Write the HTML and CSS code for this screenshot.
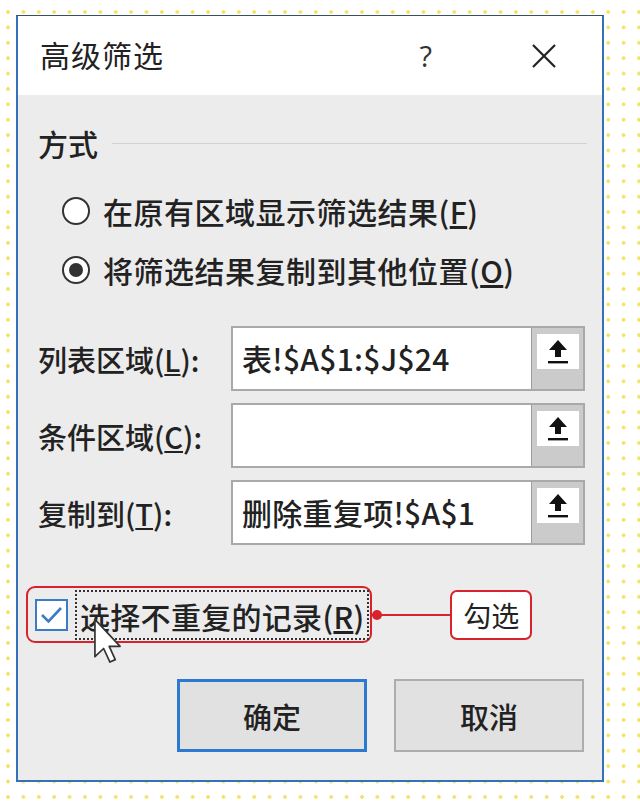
FILE: index.html
```html
<!DOCTYPE html>
<html>
<head>
    <meta charset="utf-8">
    <title>高级筛选</title>
    <link rel="stylesheet" href="styles.css">
</head>
<body>
    <div class="dialog">
        <div class="title-bar">
            <span class="title">高级筛选</span>
            <span class="help">?</span>
            <svg class="close" width="28" height="28" viewBox="0 0 28 28">
                <path d="M3 3 L25 25 M25 3 L3 25" stroke="#222" stroke-width="2.2" fill="none"/>
            </svg>
        </div>

        <div class="dialog-body">
            <div class="group-head">
                <span>方式</span>
                <span class="group-line"></span>
            </div>

            <div class="radio-row">
                <span class="radio"></span>
                <span>在原有区域显示筛选结果(<u>F</u>)</span>
            </div>
            <div class="radio-row">
                <span class="radio checked"></span>
                <span>将筛选结果复制到其他位置(<u>O</u>)</span>
            </div>

            <div class="fields">
                <label class="field-label">列表区域(<u>L</u>):</label>
                <div class="ref-box">
                    <span class="ref-text">表!$A$1:$J$24</span>
                    <span class="ref-btn"><span class="ref-face">
                        <svg width="24" height="30" viewBox="0 0 24 30"><path d="M12 3 L21 13 L15 13 L15 20 L9 20 L9 13 L3 13 Z" fill="#111"/><rect x="2" y="24" width="20" height="2.4" fill="#111"/></svg>
                    </span></span>
                </div>

                <label class="field-label">条件区域(<u>C</u>):</label>
                <div class="ref-box">
                    <span class="ref-text"></span>
                    <span class="ref-btn"><span class="ref-face">
                        <svg width="24" height="30" viewBox="0 0 24 30"><path d="M12 3 L21 13 L15 13 L15 20 L9 20 L9 13 L3 13 Z" fill="#111"/><rect x="2" y="24" width="20" height="2.4" fill="#111"/></svg>
                    </span></span>
                </div>

                <label class="field-label">复制到(<u>T</u>):</label>
                <div class="ref-box">
                    <span class="ref-text">删除重复项!$A$1</span>
                    <span class="ref-btn"><span class="ref-face">
                        <svg width="24" height="30" viewBox="0 0 24 30"><path d="M12 3 L21 13 L15 13 L15 20 L9 20 L9 13 L3 13 Z" fill="#111"/><rect x="2" y="24" width="20" height="2.4" fill="#111"/></svg>
                    </span></span>
                </div>
            </div>

            <div class="check-row">
                <div class="callout">
                    <span class="checkbox">
                        <svg width="29" height="28" viewBox="0 0 29 28"><path d="M5 14 L11.5 20.5 L24 7" stroke="#3a7dc4" stroke-width="2.6" fill="none"/></svg>
                    </span>
                    <span class="check-text">选择不重复的记录(<u>R</u>)</span>
                    <svg class="cursor" width="30" height="46" viewBox="0 0 12 19">
                        <path d="M0.6 0.6 L0.6 16 L4.2 12.6 L6.8 18.2 L9 17.2 L6.5 11.7 L11 11.7 Z" fill="#fff" stroke="#333" stroke-width="0.7" stroke-linejoin="round"/>
                    </svg>
                </div>
                <span class="connector"></span>
                <span class="tag">勾选</span>
            </div>

            <div class="actions">
                <button class="btn default">确定</button>
                <button class="btn">取消</button>
            </div>
        </div>
    </div>
</body>
</html>
```

FILE: styles.css
```css
body {
    margin: 0;
    width: 640px;
    height: 809px;
    font-family: "Noto Sans CJK SC", "Noto Sans", sans-serif;
    font-weight: 500;
    color: #222;
    background-color: #fff;
    background-image: radial-gradient(circle, #f2e46a 1.6px, transparent 2.1px);
    background-size: 15.4px 15.4px;
    background-position: 0.3px 4.3px;
    padding-top: 15px;
    box-sizing: border-box;
}
.dialog {
    box-sizing: border-box;
    width: 588px;
    height: 767px;
    margin-left: 16px;
    border: 2px solid #3570b8;
    border-top: 1px solid #3d4e63;
    display: flex;
    flex-direction: column;
}
.title-bar {
    height: 79px;
    background: #fff;
    display: flex;
    align-items: center;
    padding-left: 22px;
    padding-right: 44px;
}
.title { font-size: 30px; flex: 1; letter-spacing: 1px; font-weight: 400; margin-top: -3px; }
.help { font-family: "Open Sans", sans-serif; font-size: 29px; margin-right: 98px; color: #333; }
.close { display: block; }

.dialog-body {
    flex: 1;
    background: #ececec;
    padding: 26px 17px 0 20px;
    font-size: 30px;
}
.group-head {
    display: flex;
    align-items: center;
    height: 44px;
}
.group-line {
    flex: 1;
    height: 1px;
    background: #d2d2d2;
    margin-left: 14px;
    margin-right: -2px;
}
.radio-row {
    display: flex;
    align-items: center;
    height: 40px;
    margin-left: 24px;
    margin-top: 26px;
    letter-spacing: 0.5px;
}
.radio-row + .radio-row { margin-top: 19px; }
.radio {
    width: 24px;
    height: 24px;
    border: 2px solid #333;
    border-radius: 50%;
    background: #fff;
    margin-right: 13px;
    display: flex;
    align-items: center;
    justify-content: center;
}
.radio.checked::after {
    content: "";
    width: 14px;
    height: 14px;
    border-radius: 50%;
    background: #333;
}

.fields {
    display: grid;
    grid-template-columns: 193px 1fr;
    row-gap: 12px;
    align-items: center;
    margin-top: 36px;
}
.field-label { font-size: 29px; }
.ref-box {
    height: 65px;
    box-sizing: border-box;
    border: 2px solid #a9a9a9;
    background: #fff;
    display: flex;
}
.ref-text {
    flex: 1;
    font-size: 30px;
    padding-left: 9px;
    line-height: 61px;
    letter-spacing: 0.3px;
}
.ref-btn {
    width: 52px;
    background: #cbcbcb;
    border-left: 1px solid #9c9c9c;
    padding: 6px 4px 0 5px;
    box-sizing: border-box;
}
.ref-face {
    display: flex;
    align-items: center;
    justify-content: center;
    height: 35px;
    background: #fff;
}

.check-row {
    display: flex;
    align-items: center;
    margin-top: 41px;
    margin-left: -12px;
}
.callout {
    position: relative;
    display: flex;
    align-items: center;
    height: 57px;
    box-sizing: border-box;
    border: 2px solid #d8232e;
    border-radius: 9px;
    padding: 0 1px 0 7px;
}
.checkbox {
    width: 33px;
    height: 32px;
    box-sizing: border-box;
    border: 2px solid #3a7dc4;
    background: #fff;
    display: flex;
    align-items: center;
    justify-content: center;
    margin-right: 7px;
}
.check-text {
    height: 50px;
    line-height: 48px;
    box-sizing: border-box;
    border: 2px dotted #333;
    padding: 0 3px 0 3px;
    font-size: 30px;
    letter-spacing: 0.3px;
}
.cursor {
    position: absolute;
    left: 65px;
    top: 30px;
}
.connector {
    position: relative;
    width: 78px;
    height: 2px;
    background: #d8232e;
}
.connector::before {
    content: "";
    position: absolute;
    left: 0;
    top: -4px;
    width: 10px;
    height: 10px;
    border-radius: 50%;
    background: #d8232e;
}
.tag {
    height: 50px;
    box-sizing: border-box;
    border: 2px solid #d8232e;
    border-radius: 7px;
    background: #fff;
    padding: 0 11px;
    line-height: 46px;
    font-size: 28px;
    font-weight: 400;
}

.actions {
    display: flex;
    justify-content: flex-end;
    gap: 27px;
    margin-top: 36px;
    margin-right: 1px;
}
.btn {
    width: 190px;
    height: 73px;
    font-family: inherit;
    font-weight: 500;
    font-size: 29px;
    color: #222;
    background: #e1e1e1;
    border: 2px solid #adadad;
}
.btn.default { border: 3px solid #2c79cf; }
```
